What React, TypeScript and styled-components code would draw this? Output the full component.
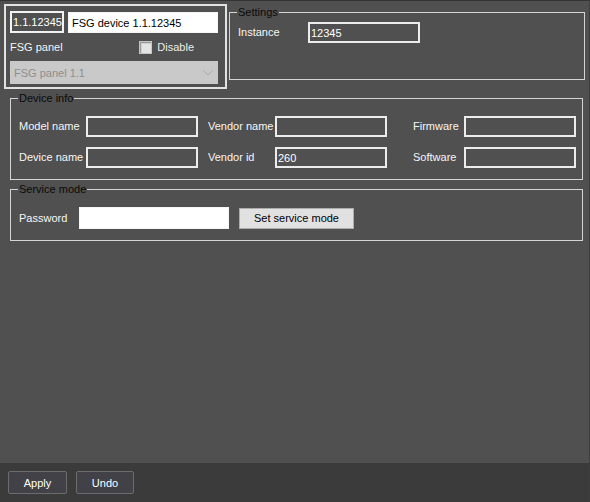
import React from 'react';
import styled, { createGlobalStyle } from 'styled-components';

const GlobalStyle = createGlobalStyle`
  html, body {
    margin: 0;
    padding: 0;
    background: #505050;
  }
  * {
    box-sizing: border-box;
  }
`;

const Window = styled.div`
  display: flex;
  flex-direction: column;
  width: 590px;
  height: 502px;
  background: #505050;
  font-family: "Liberation Sans", Arial, sans-serif;
  font-size: 11px;
  color: #f4f4f4;
  border-top: 1px solid #343434;
  border-right: 1px solid #3e3e3e;
`;

const Main = styled.div`
  flex: 1;
  padding: 3px 0 0 4px;
`;

const TopRow = styled.div`
  display: flex;
  align-items: flex-start;
  gap: 2px;
`;

const DevicePanel = styled.div`
  width: 223px;
  height: 85px;
  border: 2px solid #e2e2e2;
  padding: 5px 7px 0 4px;
  display: flex;
  flex-direction: column;
`;

const NameRow = styled.div`
  display: flex;
  align-items: flex-start;
  gap: 4px;
`;

const IdBox = styled.div`
  width: 54px;
  height: 22px;
  border: 2px solid #f2f2f2;
  color: #ffffff;
  line-height: 18px;
  padding-left: 1px;
  white-space: nowrap;
  overflow: hidden;
`;

const TextInput = styled.input<{ $w: number; $h?: number; $light?: boolean }>`
  width: ${p => p.$w}px;
  height: ${p => p.$h ?? 21}px;
  margin: 0;
  padding: 0 0 0 ${p => (p.$light ? 3 : 1)}px;
  font: inherit;
  outline: none;
  border: ${p => (p.$light ? '1px solid #f6f6f6' : '2px solid #ececec')};
  background: ${p => (p.$light ? '#ffffff' : 'transparent')};
  color: ${p => (p.$light ? '#000000' : '#ffffff')};
`;

const PanelRow = styled.div`
  display: flex;
  align-items: center;
  justify-content: space-between;
  height: 28px;
  padding-right: 24px;
`;

const CheckLabel = styled.label`
  display: flex;
  align-items: center;
  gap: 5px;
  color: #ececec;
`;

const CheckBox = styled.span`
  display: inline-block;
  width: 13px;
  height: 13px;
  border: 1px solid #c4c4c4;
  background: #e4e4e4;
  box-shadow: inset 1px 1px 0 #9a9a9a, inset 2px 2px 0 #d0d0d0;
`;

const Select = styled.div`
  display: flex;
  align-items: center;
  justify-content: space-between;
  width: 208px;
  height: 23px;
  background: #c9c9c9;
  color: #8e8e8e;
  padding: 0 5px 0 4px;
`;

const Group = styled.fieldset<{ $w: number; $top: number; $left?: number; $h?: number }>`
  width: ${p => p.$w}px;
  ${p => (p.$h ? `height: ${p.$h}px;` : '')}
  margin: ${p => p.$top}px 0 0 ${p => p.$left ?? 0}px;
  padding: 0 6px 0 8px;
  border: 1px solid #d4d4d4;
  min-width: 0;
`;

const Legend = styled.legend`
  padding: 0 1px;
  margin-left: -1px;
  line-height: 13px;
  color: #0a0a0a;
`;

const FieldLine = styled.div<{ $pt: number; $pb?: number }>`
  display: flex;
  align-items: center;
  padding: ${p => p.$pt}px 0 ${p => p.$pb ?? 0}px 0;
`;

const Label = styled.span<{ $w: number }>`
  width: ${p => p.$w}px;
  flex: none;
  white-space: nowrap;
  color: #f6f6f6;
  padding-bottom: 1px;
`;

const InfoGrid = styled.div`
  display: grid;
  grid-template-columns: 189px 205px 1fr;
  row-gap: 10px;
  padding: 11px 0 11px 0;
`;

const Field = styled.div`
  display: flex;
  align-items: center;
`;

const SysButton = styled.button`
  margin: 0 0 0 10px;
  width: 115px;
  height: 21px;
  padding: 0;
  font: inherit;
  color: #000;
  background: #e1e1e1;
  border: 1px solid #adadad;
`;

const BottomBar = styled.div`
  height: 39px;
  flex: none;
  background: #3b3b3b;
  display: flex;
  align-items: flex-start;
  gap: 9px;
  padding: 8px 0 0 8px;
`;

const BarButton = styled.button<{ $w: number }>`
  width: ${p => p.$w}px;
  height: 23px;
  margin: 0;
  padding: 0;
  font: inherit;
  color: #ffffff;
  background: #414147;
  border: 1px solid #6c6c6c;
  border-radius: 2px;
`;

const Chevron = () => (
  <svg width="10" height="6" viewBox="0 0 10 6">
    <polyline points="0.5,0.5 5,5 9.5,0.5" fill="none" stroke="#aaaaaa" strokeWidth="1" />
  </svg>
);

const infoFields: [string, number, string][] = [
  ['Model name', 67, ''],
  ['Vendor name', 67, ''],
  ['Firmware', 51, ''],
  ['Device name', 67, ''],
  ['Vendor id', 67, '260'],
  ['Software', 51, ''],
];

export default function App() {
  return (
    <>
      <GlobalStyle />
      <Window>
        <Main>
          <TopRow>
            <DevicePanel>
              <NameRow>
                <IdBox>1.1.12345</IdBox>
                <TextInput $w={150} $light readOnly value="FSG device 1.1.12345" style={{ marginTop: 1 }} />
              </NameRow>
              <PanelRow>
                <span>FSG panel</span>
                <CheckLabel>
                  <CheckBox />
                  Disable
                </CheckLabel>
              </PanelRow>
              <Select>
                <span>FSG panel 1.1</span>
                <Chevron />
              </Select>
            </DevicePanel>
            <Group $w={356} $h={74} $top={2}>
              <Legend>Settings</Legend>
              <FieldLine $pt={3}>
                <Label $w={70}>Instance</Label>
                <TextInput $w={112} readOnly value="12345" />
              </FieldLine>
            </Group>
          </TopRow>
          <Group $w={573} $top={3} $left={6}>
            <Legend>Device info</Legend>
            <InfoGrid>
              {infoFields.map(([name, w, value]) => (
                <Field key={name}>
                  <Label $w={w}>{name}</Label>
                  <TextInput $w={112} readOnly value={value} />
                </Field>
              ))}
            </InfoGrid>
          </Group>
          <Group $w={573} $top={3} $left={6}>
            <Legend>Service mode</Legend>
            <FieldLine $pt={11} $pb={11}>
              <Label $w={60}>Password</Label>
              <TextInput $w={150} $h={22} $light type="password" readOnly value="" />
              <SysButton>Set service mode</SysButton>
            </FieldLine>
          </Group>
        </Main>
        <BottomBar>
          <BarButton $w={59}>Apply</BarButton>
          <BarButton $w={58}>Undo</BarButton>
        </BottomBar>
      </Window>
    </>
  );
}
